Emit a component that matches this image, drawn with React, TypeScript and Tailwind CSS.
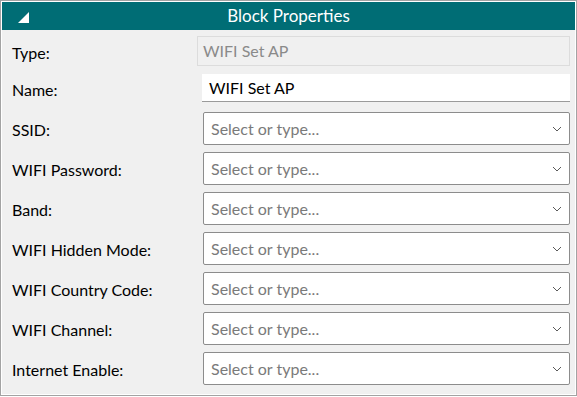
const selectFields = [
  'SSID:',
  'WIFI Password:',
  'Band:',
  'WIFI Hidden Mode:',
  'WIFI Country Code:',
  'WIFI Channel:',
  'Internet Enable:',
]

const Chevron = () => (
  <svg width="10" height="6" viewBox="0 0 10 6" className="shrink-0">
    <path d="M1 1l4 4 4-4" fill="none" stroke="#5a5a5a" strokeWidth="1" />
  </svg>
)

const App = () => {
  return (
    <div className="h-[397px] w-[577px] bg-white" style={{ fontFamily: 'Lato, "Noto Sans", sans-serif' }}>
      <div className="flex h-[396px] w-[577px] flex-col border border-[#a3a3a3] p-px">
        <div className="relative flex h-[28px] shrink-0 items-center justify-center bg-[#006d75] text-[17px] text-white">
          <svg width="11" height="11" viewBox="0 0 11 11" className="absolute left-[16px] top-[10px]">
            <path d="M11 0V11H0Z" fill="white" />
          </svg>
          Block Properties
        </div>
        <div className="flex-1 bg-[#f0f0f0] pl-[10px] pr-[5px] pt-[6px] text-[16px] text-black">
          <div className="flex h-[30px] items-center">
            <span className="mt-[3px] w-[185px]">Type:</span>
            <div className="flex h-full flex-1 items-center border border-[#dcdcdc] px-[5px] text-[#8a8a8a]">WIFI Set AP</div>
          </div>
          <div className="mt-[8px] flex h-[28px] items-center">
            <span className="mt-[3px] w-[190px]">Name:</span>
            <div className="flex h-full flex-1 items-center border-b border-[#9a9a9a] bg-white px-[7px] text-[16px]">WIFI Set AP</div>
          </div>
          <div className="mt-[10px] flex flex-col gap-[7px]">
            {selectFields.map((label) => (
              <div key={label} className="flex h-[33px] items-center">
                <span className="mt-[3px] w-[191px]">{label}</span>
                <div className="flex h-full flex-1 items-center justify-between rounded-[2px] border border-[#8c8c8c] bg-white pl-[7px] pr-[7px] text-[16px] text-[#7a7a7a]">
                  <span>Select or type...</span>
                  <Chevron />
                </div>
              </div>
            ))}
          </div>
        </div>
      </div>
    </div>
  )
}

export default App
